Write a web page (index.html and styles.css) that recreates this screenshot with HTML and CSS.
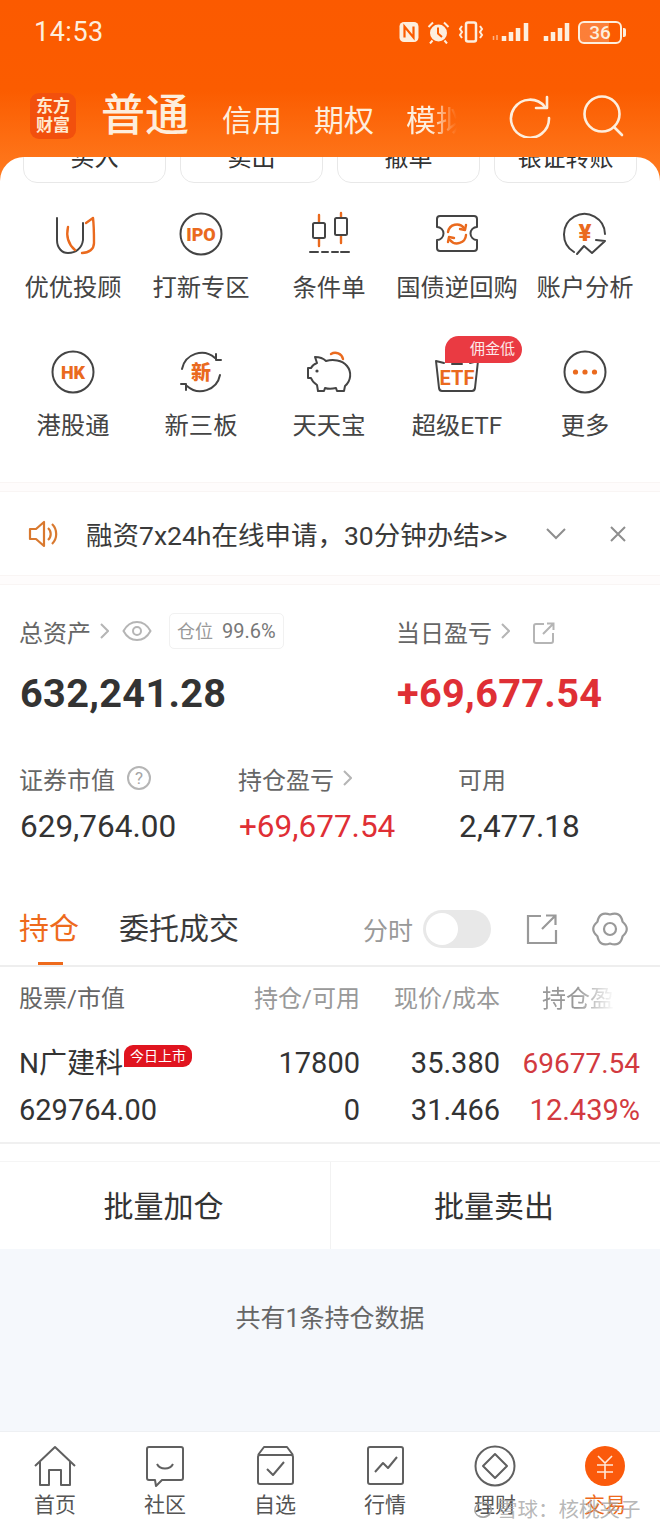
FILE: index.html
```html
<!DOCTYPE html>
<html lang="zh-CN">
<head>
    <meta charset="UTF-8">
    <title>交易</title>
    <link rel="stylesheet" href="styles.css">
</head>
<body>
<div class="app">
    <header class="top">
        <div class="status">
            <span class="clock">14:53</span>
            <div class="status-icons">
                <svg width="20" height="22" viewBox="0 0 20 22"><rect x="0.500" y="1" width="19" height="20" rx="4.500" fill="#fdeedd"/><path d="M5.500 16.500V5.500l9 11V5.500" fill="none" stroke="#fb5c00" stroke-width="2.200"/></svg>
                <svg width="23" height="24" viewBox="0 0 23 24"><circle cx="11.500" cy="13" r="8.500" fill="#fdeedd"/><path d="M11 7.500v6l4 3.500" stroke="#fb5c00" stroke-width="2" fill="none"/><path d="M1.500 7l4.500-4.500M21.500 7L17 2.500M5.500 20.500l-2.500 3M17.500 20.500l2.500 3" class="st"/></svg>
                <svg width="26" height="22" viewBox="0 0 26 22"><rect x="8" y="1.500" width="10" height="19" rx="2" class="st wider"/><path d="M4 5l-2 3 2 3-2 3 2 3M22 5l2 3-2 3 2 3-2 3" class="st"/></svg>
                <svg width="39" height="22" viewBox="0 0 39 22"><path d="M1.500 15v4M5 14v5" class="st thin"/><path d="M12 15v5M19 11v9M26 7v13M34 2v18" class="st bar"/></svg>
                <svg class="sig2" width="27" height="22" viewBox="0 0 27 22"><path d="M3 15v5M10 11v9M17 7v13M24 2v18" class="st bar"/></svg>
                <div class="battery"><span class="battery-num">36</span></div>
                <span class="battery-nib"></span>
            </div>
        </div>
        <div class="navbar">
            <div class="logo"><span>东方</span><span>财富</span></div>
            <span class="tab-main">普通</span>
            <div class="tabs">
                <span>信用</span>
                <span>期权</span>
                <span class="fade">模拟</span>
            </div>
            <div class="top-actions">
                <svg width="44" height="44" viewBox="0 0 44 44"><path d="M36 13A19 19 0 1 0 40 24" class="st wide"/><path d="M38 3v11H27" class="st wide"/></svg>
                <svg width="44" height="44" viewBox="0 0 44 44"><circle cx="21" cy="20" r="17.500" class="st wide"/><path d="M33 33l8 8" class="st wide"/></svg>
            </div>
        </div>
    </header>

    <main class="panel">
        <div class="quick-row">
            <div class="quick-btn">买入</div>
            <div class="quick-btn">卖出</div>
            <div class="quick-btn">撤单</div>
            <div class="quick-btn">银证转账</div>
        </div>

        <section class="menu">
            <div class="menu-item">
                <svg width="48" height="48" viewBox="0 0 48 48"><path d="M8 8V30C8 38 13 43 19 43C27 43 33 38 34 30V13" class="ic"/><path d="M19 17C17 26 19 34 26 40" class="ic or"/><path d="M33 43C40 43 45 39 45 33C45 24 45 16 44 8L37 13" class="ic or"/></svg>
                <span>优优投顾</span>
            </div>
            <div class="menu-item">
                <svg width="48" height="48" viewBox="0 0 48 48"><circle cx="24" cy="24" r="20.500" class="ic"/><text x="24" y="30.500" class="ic-text">IPO</text></svg>
                <span>打新专区</span>
            </div>
            <div class="menu-item">
                <svg width="48" height="48" viewBox="0 0 48 48"><path d="M14 5v31M36 3v30" class="ic or"/><rect x="8" y="13" width="12" height="15" rx="1.500" class="ic white"/><rect x="30" y="8" width="12" height="17" rx="1.500" class="ic white"/><path d="M5 42h8M17 42h6M27 42h6M36 42h8" class="ic"/></svg>
                <span>条件单</span>
            </div>
            <div class="menu-item">
                <svg width="48" height="48" viewBox="0 0 48 48"><path d="M7 6H41a3 3 0 0 1 3 3V17a6.500 6.500 0 0 0 0 13V38a3 3 0 0 1-3 3H7a3 3 0 0 1-3-3V30a6.500 6.500 0 0 0 0-13V9a3 3 0 0 1 3-3z" class="ic"/><path d="M15 22a9 9 0 0 1 16-4M33 25a9 9 0 0 1-16 5" class="ic or"/><path d="M27 19l5 1 1-5M21 28l-5-1-1 5" class="ic or"/></svg>
                <span>国债逆回购</span>
            </div>
            <div class="menu-item">
                <svg width="48" height="48" viewBox="0 0 48 48"><path d="M13 42A20.500 20.500 0 1 1 44 24" class="ic"/><path d="M16 44l7-8 8 7 13-12-9-1" class="ic"/><text x="24" y="31" class="ic-text yen">¥</text></svg>
                <span>账户分析</span>
            </div>
            <div class="menu-item">
                <svg width="48" height="48" viewBox="0 0 48 48"><circle cx="24" cy="24" r="20.500" class="ic"/><text x="24" y="30.500" class="ic-text">HK</text></svg>
                <span>港股通</span>
            </div>
            <div class="menu-item">
                <svg width="48" height="48" viewBox="0 0 48 48"><path d="M5 21A20 20 0 0 1 38 10M43 27A20 20 0 0 1 10 38" class="ic"/><path d="M39 6v6h5M9 42v-6H4" class="ic"/><text x="24" y="32" class="ic-text cjk">新</text></svg>
                <span>新三板</span>
            </div>
            <div class="menu-item">
                <svg width="48" height="48" viewBox="0 0 48 48"><path d="M12 15L10 9C15 9 19 11 21 13C28 11 37 12 42 18C47 24 46 33 40 38L39 43H32L31 40C27 41 23 41 20 40L19 43H13L12 37C9 35 7 33 6 30H3V20H6C7 18 9 16 12 15z" class="ic"/><circle cx="12" cy="23" r="1.600" fill="#444"/><path d="M26 6a8 8 0 0 1 12 5" class="ic or"/></svg>
                <span>天天宝</span>
            </div>
            <div class="menu-item etf">
                <svg width="48" height="48" viewBox="0 0 48 48"><path d="M3 13L11 15M45 13L37 15M19 16H29M3 13L6 40C6.300 42 7.500 43 9 43H39C41 43 41.700 42 42 40L45 13" class="ic"/><text x="24" y="37" class="ic-text etf-text">ETF</text></svg>
                <span>超级ETF</span>
                <span class="etf-badge">佣金低</span>
            </div>
            <div class="menu-item">
                <svg width="48" height="48" viewBox="0 0 48 48"><circle cx="24" cy="24" r="20.500" class="ic"/><circle cx="14.500" cy="24" r="2.600" fill="#ea6a1e"/><circle cx="24" cy="24" r="2.600" fill="#ea6a1e"/><circle cx="33.500" cy="24" r="2.600" fill="#ea6a1e"/></svg>
                <span>更多</span>
            </div>
        </section>

        <div class="band"></div>

        <section class="notice">
            <svg class="notice-ic" width="30" height="30" viewBox="0 0 30 30"><path d="M2 10H8L16 3V27L8 20H2z" fill="none" stroke="#d9792f" stroke-width="2.200" stroke-linejoin="round"/><path d="M20 9a8 8 0 0 1 0 12M24 5a14 14 0 0 1 0 20" fill="none" stroke="#d9792f" stroke-width="2.200"/></svg>
            <span class="notice-text">融资7x24h在线申请，30分钟办结&gt;&gt;</span>
            <svg class="notice-chev" width="22" height="14" viewBox="0 0 22 14"><path d="M2 2l9 9 9-9" class="gr"/></svg>
            <svg class="notice-x" width="20" height="20" viewBox="0 0 20 20"><path d="M3 3l14 14M17 3L3 17" class="gr"/></svg>
        </section>

        <div class="band"></div>

        <section class="assets">
            <div class="assets-top">
                <div>
                    <div class="label-row">
                        <span>总资产</span>
                        <svg width="10" height="18" viewBox="0 0 10 18"><path d="M2 2l7 7-7 7" class="gr lt"/></svg>
                        <svg class="eye" width="30" height="22" viewBox="0 0 30 22"><path d="M1.500 11C5 4.500 10 2 15 2s10 2.500 13.500 9C25 17.500 20 20 15 20S5 17.500 1.500 11z" class="gr lt"/><circle cx="15" cy="11" r="4" class="gr lt"/></svg>
                        <span class="pos-tag"><em>仓位</em> 99.6%</span>
                    </div>
                    <div class="big">632,241.28</div>
                </div>
                <div>
                    <div class="label-row">
                        <span>当日盈亏</span>
                        <svg width="10" height="18" viewBox="0 0 10 18"><path d="M2 2l7 7-7 7" class="gr lt"/></svg>
                        <svg class="share" width="22" height="22" viewBox="0 0 22 22"><path d="M11 2H3a2 2 0 0 0-2 2V19a2 2 0 0 0 2 2H18a2 2 0 0 0 2-2V11M10 12L20 2M14 1.500h6.500V8" class="gr lt"/></svg>
                    </div>
                    <div class="big red">+69,677.54</div>
                </div>
            </div>
            <div class="assets-sub">
                <div>
                    <div class="label-row">
                        <span>证券市值</span>
                        <svg class="help" width="26" height="26" viewBox="0 0 26 26"><circle cx="13" cy="13" r="11" class="gr lt"/><text x="13" y="19" class="help-q">?</text></svg>
                    </div>
                    <div class="mid">629,764.00</div>
                </div>
                <div>
                    <div class="label-row">
                        <span>持仓盈亏</span>
                        <svg width="10" height="18" viewBox="0 0 10 18"><path d="M2 2l7 7-7 7" class="gr lt"/></svg>
                    </div>
                    <div class="mid red">+69,677.54</div>
                </div>
                <div>
                    <div class="label-row"><span>可用</span></div>
                    <div class="mid">2,477.18</div>
                </div>
            </div>
        </section>

        <section class="hold-tabs">
            <span class="hold-tab active">持仓</span>
            <span class="hold-tab">委托成交</span>
            <span class="fenshi">分时</span>
            <span class="toggle"><i></i></span>
            <svg class="tool" width="32" height="32" viewBox="0 0 32 32"><path d="M15 3H2V30H30V17M16 16L29 3M20 2.500h9.500V12" class="tool-line"/></svg>
            <svg class="tool" width="38" height="36" viewBox="0 0 38 36"><path d="M31.560 25.250Q29.500 36.200 19 32.500Q8.500 36.200 6.440 25.250Q-2 18 6.440 10.750Q8.500-.2 19 3.500Q29.500-.2 31.560 10.750Q40 18 31.560 25.250z" class="tool-line round"/><circle cx="19" cy="18" r="6" class="tool-line"/></svg>
        </section>

        <section class="table">
            <div class="t-row t-head">
                <span>股票/市值</span>
                <span>持仓/可用</span>
                <span>现价/成本</span>
                <span class="fade-head">持仓盈亏</span>
            </div>
            <div class="t-row t-data">
                <span class="stock">N广建科<b class="ipo-tag">今日上市</b></span>
                <span>17800</span>
                <span>35.380</span>
                <span class="pl tight">69677.54</span>
            </div>
            <div class="t-row t-data">
                <span>629764.00</span>
                <span>0</span>
                <span>31.466</span>
                <span class="pl">12.439%</span>
            </div>
        </section>

        <section class="batch">
            <div>批量加仓</div>
            <div>批量卖出</div>
        </section>

        <section class="empty">共有1条持仓数据</section>
    </main>

    <nav class="bottom">
        <div class="nav-item">
            <svg width="44" height="44" viewBox="0 0 44 44"><path d="M2 22L22 3l20 19M7 18V41H16V26H28V41H37V18" class="nv"/></svg>
            <span>首页</span>
        </div>
        <div class="nav-item">
            <svg width="44" height="44" viewBox="0 0 44 44"><path d="M6 3H38a2 2 0 0 1 2 2V34a2 2 0 0 1-2 2H19l-6 6-1-6H6a2 2 0 0 1-2-2V5a2 2 0 0 1 2-2z" class="nv"/><path d="M14 20c3 6 13 6 16 0" class="nv"/></svg>
            <span>社区</span>
        </div>
        <div class="nav-item">
            <svg width="44" height="44" viewBox="0 0 44 44"><path d="M5 11L11 3H34L40 11M7 11H38a2 2 0 0 1 2 2V38a2 2 0 0 1-2 2H7a2 2 0 0 1-2-2V13a2 2 0 0 1 2-2z" class="nv"/><path d="M14 25l6 6 11-13" class="nv"/></svg>
            <span>自选</span>
        </div>
        <div class="nav-item">
            <svg width="44" height="44" viewBox="0 0 44 44"><rect x="5" y="3" width="35" height="37" rx="2" class="nv"/><path d="M12 28l8-9 5 5 9-11" class="nv"/></svg>
            <span>行情</span>
        </div>
        <div class="nav-item">
            <svg width="44" height="44" viewBox="0 0 44 44"><circle cx="22" cy="22" r="19.500" class="nv"/><path d="M22 10l12 12-12 12L10 22z" class="nv"/></svg>
            <span>理财</span>
        </div>
        <div class="nav-item active">
            <svg width="44" height="44" viewBox="0 0 44 44"><circle cx="22" cy="22" r="20" fill="#fb5a0b"/><path d="M15 12l7 7 7-7M14 21H30M14 28H30M22 20V35" fill="none" stroke="#ffe8d8" stroke-width="1.600"/></svg>
            <span>交易</span>
        </div>
    </nav>

    <div class="watermark">
        <svg width="22" height="22" viewBox="0 0 24 22"><ellipse cx="11" cy="11" rx="9" ry="8" fill="none" stroke="#a5a5a5" stroke-width="1.500"/><path d="M6 17c4 3 9 2 12-2" fill="none" stroke="#a5a5a5" stroke-width="1.500"/></svg>
        <span>雪球：核桃夹子</span>
    </div>
</div>
</body>
</html>
```

FILE: styles.css
```css
/* Base */
* {
    box-sizing: border-box;
}

body {
    margin: 0;
    font-family: Roboto, "Noto Sans CJK SC", sans-serif;
    color: #333;
}

.app {
    position: relative;
    width: 660px;
    height: 1530px;
    overflow: hidden;
    display: flex;
    flex-direction: column;
    background: linear-gradient(180deg, #fb5a00 0, #fb5c00 90px, #ff7d22 185px);
}

/* Orange header */
.top {
    height: 157px;
    flex: none;
    color: #fdeedd;
}

.status {
    display: flex;
    align-items: center;
    justify-content: space-between;
    padding: 16px 34px 0 34px;
    height: 48px;
}

.clock {
    font-size: 27px;
    letter-spacing: 0.5px;
}

.status-icons {
    display: flex;
    align-items: center;
    gap: 8px;
}

.sig2 {
    margin-left: 4px;
}

.st {
    fill: none;
    stroke: #fdeedd;
    stroke-width: 2;
}

.st.wider {
    stroke-width: 2.500;
}

.st.bar {
    stroke-width: 4.500;
}

.st.thin {
    stroke-width: 1.500;
    opacity: 0.6;
}

.st.wide {
    stroke-width: 2.600;
    stroke-linecap: round;
    stroke-linejoin: round;
}

.battery {
    width: 44px;
    height: 23px;
    border: 2px solid #fdeedd;
    border-radius: 6px;
    background: linear-gradient(90deg, rgba(255, 255, 255, 0.22) 72%, transparent 72%);
    display: flex;
    align-items: center;
    justify-content: center;
}

.battery-num {
    font-size: 19px;
    font-weight: 500;
    line-height: 1;
}

.battery-nib {
    width: 3px;
    height: 9px;
    margin-left: -7px;
    border-radius: 0 2px 2px 0;
    background: #fdeedd;
}

.navbar {
    display: flex;
    align-items: center;
    height: 70px;
    margin-top: 33px;
    padding-left: 30px;
}

.logo {
    width: 46px;
    height: 46px;
    border-radius: 9px;
    background: #f2500d;
    display: flex;
    flex-direction: column;
    align-items: center;
    justify-content: center;
    font-size: 17px;
    line-height: 19px;
    font-weight: 700;
    color: #ffe9cf;
}

.tab-main {
    margin-left: 25px;
    font-size: 44px;
    font-weight: 500;
    line-height: 56px;
}

.tabs {
    display: flex;
    gap: 32px;
    width: 240px;
    margin: 10px 0 0 33px;
    font-size: 30px;
    line-height: 44px;
    white-space: nowrap;
}

.tabs .fade {
    -webkit-mask-image: linear-gradient(90deg, #000 40%, transparent 85%);
    mask-image: linear-gradient(90deg, #000 40%, transparent 85%);
}

.top-actions {
    display: flex;
    gap: 28px;
    margin-left: 47px;
}

/* White panel */
.panel {
    flex: 1;
    display: flex;
    flex-direction: column;
    background: #fff;
    border-radius: 24px 24px 0 0;
    overflow: hidden;
}

.quick-row {
    display: flex;
    gap: 14px;
    padding: 0 23px;
    margin-top: -24px;
}

.quick-btn {
    width: 143.500px;
    height: 50px;
    border: 1px solid #e8e8e8;
    border-radius: 14px;
    font-size: 24px;
    line-height: 48px;
    text-align: center;
    color: #333;
}

.menu {
    display: grid;
    grid-template-columns: repeat(5, 128px);
    align-content: start;
    row-gap: 43px;
    height: 299px;
    padding: 27px 9px 0;
}

.menu-item {
    position: relative;
    display: flex;
    flex-direction: column;
    align-items: center;
    gap: 13px;
    font-size: 24.300px;
    line-height: 34px;
    color: #444;
    white-space: nowrap;
}

.ic {
    fill: none;
    stroke: #444;
    stroke-width: 2;
    stroke-linecap: round;
    stroke-linejoin: round;
}

.ic.or {
    stroke: #ea6a1e;
    stroke-width: 2.400;
}

.ic.white {
    fill: #fff;
}

.ic-text {
    font-family: Roboto, sans-serif;
    font-size: 18px;
    font-weight: 900;
    fill: #ea6a1e;
    text-anchor: middle;
}

.ic-text.yen {
    font-size: 24px;
}

.ic-text.cjk {
    font-family: "Noto Sans CJK SC", sans-serif;
    font-size: 20px;
}

.ic-text.etf-text {
    font-size: 20px;
    font-weight: 700;
}

.etf-badge {
    position: absolute;
    left: 52px;
    top: -12px;
    width: 77px;
    height: 27px;
    padding-right: 7px;
    border-radius: 14px 14px 14px 0;
    background: #ea3a42;
    color: #fdeaea;
    font-size: 15px;
    line-height: 27px;
    text-align: right;
}

.band {
    height: 10px;
    flex: none;
    background: #fefcfc;
    border-top: 1px solid #f9f5f4;
    border-bottom: 1px solid #f9f5f4;
}

/* Notice bar */
.notice {
    display: flex;
    align-items: center;
    height: 83px;
    padding-left: 28px;
}

.notice-text {
    margin-left: 28px;
    width: 458px;
    font-size: 26.500px;
    color: #3a3a3a;
    white-space: nowrap;
}

.notice-chev {
    margin-left: 1px;
}

.notice-x {
    margin-left: 41px;
}

.gr {
    fill: none;
    stroke: #8e8e8e;
    stroke-width: 2;
}

.gr.lt {
    stroke: #b5b5b5;
}

/* Assets */
.assets {
    padding: 29px 20px 0;
}

.assets-top {
    display: grid;
    grid-template-columns: 377px 1fr;
}

.assets-sub {
    display: grid;
    grid-template-columns: 219px 220px 1fr;
    margin-top: 42px;
}

.label-row {
    display: flex;
    align-items: center;
    gap: 8px;
    height: 34px;
    margin-left: -1px;
    font-size: 24px;
    color: #666;
    white-space: nowrap;
}

.eye {
    margin-left: 5px;
}

.share {
    margin: 3px 0 0 15px;
}

.help {
    margin-left: 3px;
}

.help-q {
    font-size: 17px;
    fill: #a5a5a5;
    text-anchor: middle;
}

.pos-tag {
    margin-left: 9px;
    height: 36px;
    padding: 0 7px;
    border: 1px solid #f1f1f1;
    border-radius: 5px;
    font-size: 20px;
    line-height: 34px;
    color: #777;
}

.pos-tag em {
    margin-right: 4px;
    font-size: 18px;
    font-style: normal;
    color: #999;
}

.big {
    margin-top: 21px;
    font-size: 39.700px;
    line-height: 50px;
    font-weight: 700;
    letter-spacing: 0.3px;
    color: #333;
}

.mid {
    margin-top: 12px;
    font-size: 31.500px;
    line-height: 40px;
    color: #333;
}

.red {
    color: #df2f35;
}

/* Position tabs */
.hold-tabs {
    display: flex;
    align-items: center;
    height: 75px;
    margin-top: 45px;
    padding: 0 31px 0 19px;
    border-bottom: 2px solid #eeeeee;
}

.hold-tab {
    position: relative;
    margin-right: 40px;
    font-size: 30px;
    line-height: 44px;
    color: #3a3a3a;
}

.hold-tab.active {
    color: #ee6a1c;
}

.hold-tab.active::after {
    content: "";
    position: absolute;
    left: 19px;
    bottom: -14px;
    width: 25px;
    height: 3px;
    background: #ee6a1c;
}

.fenshi {
    margin-left: auto;
    font-size: 25px;
    color: #999;
}

.toggle {
    width: 68px;
    height: 38px;
    margin-left: 10px;
    padding: 3px;
    border-radius: 19px;
    background: #e8e8e8;
}

.toggle i {
    display: block;
    width: 32px;
    height: 32px;
    border-radius: 50%;
    background: #fff;
}

.tool {
    margin-left: 35px;
}

.tool + .tool {
    margin-left: 33px;
}

.tool-line {
    fill: none;
    stroke: #999;
    stroke-width: 2.200;
}

.tool-line.round {
    stroke-linejoin: round;
}

/* Holdings table */
.table {
    padding: 17px 20px 8px 19px;
    border-bottom: 2px solid #f0f0f0;
}

.t-row {
    display: grid;
    grid-template-columns: 201px 140px 140px 140px;
    text-align: right;
    white-space: nowrap;
}

.t-row span:first-child {
    text-align: left;
}

.t-head {
    height: 56px;
    font-size: 24px;
    line-height: 30px;
    color: #999;
}

.t-head span:first-child {
    color: #666;
}

.fade-head {
    -webkit-mask-image: linear-gradient(90deg, #000 55%, transparent 82%);
    mask-image: linear-gradient(90deg, #000 55%, transparent 82%);
    padding-right: 2px;
}

.t-data {
    height: 47px;
    font-size: 29px;
    line-height: 47px;
    color: #333;
}

.stock {
    position: relative;
    font-size: 28px;
}

.ipo-tag {
    position: absolute;
    left: 105px;
    top: 5px;
    width: 68px;
    height: 22px;
    border-radius: 9px 9px 9px 0;
    background: #e0141f;
    color: #fff;
    font-size: 14px;
    font-weight: 400;
    line-height: 22px;
    text-align: center;
}

.pl {
    color: #d23a40;
}

.pl.tight {
    font-size: 28px;
}

/* Batch buttons */
.batch {
    display: grid;
    grid-template-columns: 330px 330px;
    height: 88px;
    margin-top: 17px;
    border-top: 1px solid #f5f5f5;
    font-size: 30px;
    line-height: 90px;
    text-align: center;
    color: #333;
}

.batch div {
    padding-right: 3px;
}

.batch div + div {
    border-left: 1px solid #f2f2f2;
}

.empty {
    flex: 1;
    padding-top: 53px;
    background: #f5f8fc;
    font-size: 25px;
    line-height: 34px;
    text-align: center;
    color: #666;
}

/* Bottom nav */
.bottom {
    display: grid;
    grid-template-columns: repeat(6, 110px);
    height: 99px;
    flex: none;
    padding-top: 12px;
    background: #fff;
    border-top: 1px solid #eef0f3;
}

.nav-item {
    display: flex;
    flex-direction: column;
    align-items: center;
    gap: 3px;
    font-size: 21px;
    line-height: 28px;
    color: #555;
}

.nav-item.active {
    color: #ee6a1c;
}

.nv {
    fill: none;
    stroke: #606060;
    stroke-width: 2;
    stroke-linejoin: round;
}

.watermark {
    position: absolute;
    left: 473px;
    top: 1497px;
    display: flex;
    align-items: center;
    gap: 2px;
    font-size: 20.500px;
    line-height: 26px;
    color: rgba(165, 165, 165, 0.8);
    white-space: nowrap;
}
```
